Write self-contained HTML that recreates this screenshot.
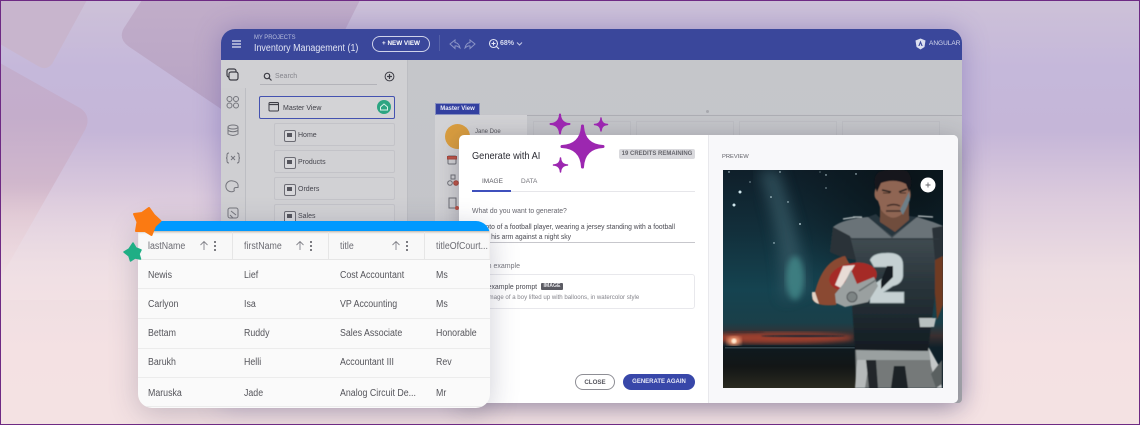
<!DOCTYPE html>
<html><head><meta charset="utf-8">
<style>
html,body{margin:0;padding:0}
body{width:1140px;height:425px;overflow:hidden;position:relative;font-family:"Liberation Sans",sans-serif;background:linear-gradient(180deg,#cdc1d8 0%,#c5b8da 16%,#c5b6d8 31%,#dccbdd 47%,#eddde2 64%,#f4e1e3 82%,#f4e2e3 100%)}
div,span{position:absolute;box-sizing:border-box;white-space:nowrap}
.frame{left:0;top:0;width:1140px;height:425px;border:1px solid #6e2a84;z-index:50}
.app{left:221px;top:29px;width:741px;height:374px;border-radius:14px 14px 4px 4px;background:#c5c6cb;box-shadow:0 0 26px rgba(90,80,160,.38);overflow:hidden}
.hd{left:0;top:0;width:741px;height:31px;background:#3a479b;color:#fff}
.ws{left:0;top:31px;width:741px;height:343px;background:linear-gradient(180deg,#c5c6ca,#c3c4c9 60%,#a9aaaf)}
.side{left:0;top:31px;width:187px;height:343px;background:#d0d0d3;border-right:1px solid #bcbdc2}
.rail{left:0;top:59px;width:25px;height:286px;border-right:1px solid #bdbec3;background:#cfcfd2}
.item{left:53px;width:121px;height:23px;background:#d1d1d4;border:1px solid #c3c3c8;border-radius:2px;font-size:7px;color:#45454d;line-height:24px;padding-left:23px}
.item i{position:absolute;left:9px;top:6px;width:10px;height:10px;border:1px solid #6c6c74;border-radius:2px;background:#d8d8db}
.item i:after{content:"";position:absolute;left:1.5px;top:2px;width:5px;height:4px;background:#55555d}
.dlg{left:459px;top:135px;width:499px;height:268px;background:#fff;border-radius:5px;box-shadow:0 4px 24px rgba(40,40,60,.3);overflow:hidden;color:#3d3d45}
.pv{left:249px;top:0;width:250px;height:268px;background:#f8f8fa;border-left:1px solid #e8e8ec}
.tbl{left:138px;top:221px;width:352px;height:187px;background:#fafafa;border-radius:14px;overflow:hidden;box-shadow:0 6px 28px rgba(60,60,90,.25);z-index:10;color:#5a5a60;font-size:9.5px}
.bar{left:0;top:0;width:352px;height:10px;background:#0099ff}
.head{left:0;top:10px;width:352px;height:29px;background:#f8f8f8;border-bottom:1px solid #e6e6e6;box-shadow:inset 0 2px 2px -1px rgba(120,100,70,.5)}
.c{font-size:9.8px;line-height:12px;color:#55555b;transform:scaleX(.9);transform-origin:0 0;margin-top:1px}
.rl{left:0;width:352px;height:1px;background:#ececec}
.vl{top:11px;width:1px;height:27px;background:#e6e6e6}
</style></head>
<body>
<svg style="position:absolute;left:0;top:0" width="1140" height="425">
<defs>
<linearGradient id="sq3" x1="0" y1="63" x2="0" y2="280" gradientUnits="userSpaceOnUse"><stop offset="0" stop-color="#c3aecd"/><stop offset=".25" stop-color="#c4adcb"/><stop offset=".55" stop-color="#d0b7cc"/><stop offset=".7" stop-color="#dfc6d2"/><stop offset="1" stop-color="#eed9de"/></linearGradient>
<linearGradient id="sq2" x1="0" y1="0" x2="0" y2="130" gradientUnits="userSpaceOnUse"><stop offset="0" stop-color="#c1adc9"/><stop offset="1" stop-color="#b6a2c4"/></linearGradient>
<linearGradient id="lf" x1="0" y1="190" x2="0" y2="300" gradientUnits="userSpaceOnUse"><stop offset="0" stop-color="#eadce6" stop-opacity="0"/><stop offset="1" stop-color="#f3e2e4" stop-opacity=".8"/></linearGradient>
</defs>
<path d="M0 0H87L52 64Q46 71 38 66L0 44Z" fill="#c8b5cd"/>
<path d="M142 0H360L335 50L300 120L230 115L128 46Q118 38 124 28Z" fill="url(#sq2)"/>
<path d="M0 63L80 108Q92 116 85 130L0 279Z" fill="url(#sq3)"/>
<path d="M0 190H140V300H0Z" fill="url(#lf)"/>
</svg>

<div class="app">
 <div class="ws"></div>
 <div class="side"></div>
 <div class="rail"></div>
 <div class="hd">
  <svg style="position:absolute;left:11px;top:11px" width="10" height="8"><path d="M0 1H9M0 4H9M0 7H9" stroke="#e3e6f4" stroke-width="1.300"/></svg>
  <span style="left:33px;top:4.500px;font-size:6.500px;color:#b9bfdd;line-height:8px;transform:scaleX(.9);transform-origin:0 0">MY PROJECTS</span>
  <span style="left:33px;top:13px;font-size:10px;color:#e2e5f4;line-height:13px;transform:scaleX(.89);transform-origin:0 0">Inventory Management (1)</span>
  <div style="left:151px;top:7px;width:58px;height:16px;border:1px solid #cfd3ea;border-radius:9px;color:#fff;font-size:6.300px;font-weight:bold;text-align:center;line-height:14px">+ NEW VIEW</div>
  <div style="left:218px;top:6px;width:1px;height:16px;background:#5360a8"></div>
  <svg style="position:absolute;left:228px;top:10px" width="30" height="12" fill="none" stroke="#8b94c6" stroke-width="1"><path d="M1 5L6 1V3.500Q10 4 11 9Q8 6.500 6 7V9.500Z"/><path d="M26 5L21 1V3.500Q17 4 16 9Q19 6.500 21 7V9.500Z"/></svg>
  <svg style="position:absolute;left:267px;top:9px" width="12" height="12" fill="none" stroke="#e3e6f5" stroke-width="1.100"><circle cx="5.500" cy="5.500" r="4"/><path d="M8.500 8.500L11 11M3.500 5.500H7.500M5.500 3.500V7.500"/></svg>
  <span style="left:279px;top:11px;font-size:7px;font-weight:bold;color:#d5d9ee;line-height:8px">68%</span>
  <svg style="position:absolute;left:295px;top:12px" width="7" height="6" fill="none" stroke="#c5cae6"><path d="M1 1.500L3.500 4L6 1.500"/></svg>
  <svg style="position:absolute;left:694px;top:9px" width="11" height="12"><path d="M5.500 .5L10.500 2.500L9.500 9L5.500 11.500L1.500 9L.5 2.500Z" fill="#dde0f0"/><path d="M5.500 2.500L3.300 8H4.500L5.500 5.500L6.500 8H7.700Z" fill="#3a479b"/></svg>
  <span style="left:708px;top:11px;font-size:6.500px;color:#d5d9ee;line-height:8px">ANGULAR S</span>
 </div>
 <svg style="position:absolute;left:0;top:31px" width="30" height="195" fill="none" stroke="#74757c" stroke-width="1">
  <rect x="6" y="9" width="9" height="8" rx="2" stroke="#3c3c44" stroke-width="1.200"/><rect x="8" y="12" width="9" height="8" rx="2" stroke="#3c3c44" stroke-width="1.200" fill="#d0d0d3"/>
  <circle cx="8.500" cy="39" r="2.500"/><circle cx="15" cy="39" r="2.500"/><circle cx="8.500" cy="45.500" r="2.500"/><circle cx="15" cy="45.500" r="2.500"/>
  <ellipse cx="12" cy="67" rx="5" ry="2"/><path d="M7 67V74Q12 77 17 74V67M7 70.500Q12 73 17 70.500"/>
  <path d="M8 93Q6 93 6 95V96.500Q6 98 5 98Q6 98 6 99.500V101Q6 103 8 103M16 93Q18 93 18 95V96.500Q18 98 19 98Q18 98 18 99.500V101Q18 103 16 103M10 96L14 100M14 96L10 100"/>
  <path d="M12 121A5.500 5.500 0 1 0 12 131.500Q14 131 13 129.500Q13 127.500 15 127.500H17Q18 122 12 121Z"/>
  <rect x="7" y="148" width="10" height="10" rx="2"/><path d="M10 151L15 155M9 155L12 158"/>
 </svg>
 <svg style="position:absolute;left:41px;top:42px" width="12" height="12" fill="none" stroke="#3d3d45" stroke-width="1.200"><circle cx="5" cy="5" r="2.700"/><path d="M7 7L9.500 9.500"/></svg>
 <span style="left:54px;top:43px;font-size:7px;color:#85858c;line-height:10px">Search</span>
 <div style="left:39px;top:55px;width:117px;height:1px;background:#b3b3b9"></div>
 <svg style="position:absolute;left:163px;top:42px" width="11" height="11" fill="none" stroke="#3d3d45"><circle cx="5.500" cy="5.500" r="4.400"/><path d="M5.500 3V8M3 5.500H8" stroke-width="1.200"/></svg>
 <div style="left:38px;top:67px;width:136px;height:23px;border:1px solid #4452b0;border-radius:2px;background:#d3d3d6"></div>
 <svg style="position:absolute;left:47px;top:72px" width="12" height="12" fill="none"><rect x="1" y="1.500" width="9.500" height="8.500" rx="1" stroke="#3d3d45" stroke-width="1"/><path d="M1 3.500H10.500" stroke="#3d3d45" stroke-width="1.300"/></svg>
 <span style="left:62px;top:74.500px;font-size:7px;color:#3e3e46;line-height:10px">Master View</span>
 <div style="left:156px;top:71px;width:14px;height:14px;border-radius:50%;background:#2ca582"></div>
 <svg style="position:absolute;left:158px;top:73px" width="10" height="10" fill="none" stroke="#d8f1e9"><path d="M1.500 5L5 2L8.500 5V8H1.500Z"/></svg>
 <div class="item" style="top:94px">Home<i></i></div>
 <div class="item" style="top:121px">Products<i></i></div>
 <div class="item" style="top:148px">Orders<i></i></div>
 <div class="item" style="top:175px">Sales<i></i></div>

 <div style="left:214px;top:74px;width:45px;height:12px;background:#3340a0;border:1px solid #8890c0;color:#e8eaf6;font-size:6px;font-weight:bold;line-height:10px;text-align:center">Master View</div>
 <div style="left:215px;top:86px;width:527px;height:1px;background:#adaeb4"></div>
 <div style="left:214px;top:86px;width:92px;height:230px;background:#d2d2d5"></div>
 <div style="left:312px;top:92px;width:98px;height:40px;border:1px solid #bdbec3"></div>
 <div style="left:415px;top:92px;width:98px;height:40px;border:1px solid #bdbec3"></div>
 <div style="left:518px;top:92px;width:98px;height:40px;border:1px solid #bdbec3"></div>
 <div style="left:621px;top:92px;width:98px;height:40px;border:1px solid #bdbec3"></div>
 <div style="left:224px;top:95px;width:25px;height:25px;border-radius:50%;background:#d99d3f"></div>
 <span style="left:254px;top:100px;font-size:6px;color:#55555c;line-height:7px">Jane Doe</span>
 <svg style="position:absolute;left:224px;top:126px" width="16" height="70" fill="none" stroke="#6e6f76"><rect x="3" y="1" width="8" height="8" rx="1"/><path d="M2.500 1.500H11.500V4H2.500Z" fill="#c25648" stroke="#a8483e"/><circle cx="5" cy="28" r="2.300"/><circle cx="11" cy="28" r="2.300" fill="#c25648" stroke="#a8483e"/><rect x="6" y="20" width="4" height="4"/><rect x="4" y="43" width="7" height="10"/><circle cx="12" cy="53" r="2" fill="#c25648" stroke="none"/></svg>
</div>
<div style="left:706px;top:110px;width:3px;height:3px;border-radius:50%;background:#a7a8ae"></div>

<div class="dlg">
 <span style="left:13px;top:15px;font-size:10.500px;color:#2b2b33;line-height:13px;transform:scaleX(.88);transform-origin:0 0">Generate with AI</span>
 <div style="left:160px;top:14px;width:76px;height:10px;background:#d9d9dd;border-radius:2px;color:#66666d;font-size:6px;font-weight:bold;text-align:center;line-height:11px">19 CREDITS REMAINING</div>
 <span style="left:23px;top:42px;font-size:6.500px;color:#5b5b63;line-height:9px">IMAGE</span>
 <span style="left:62px;top:42px;font-size:6.500px;color:#74747b;line-height:9px">DATA</span>
 <div style="left:13px;top:56px;width:223px;height:1px;background:#e6e6ea"></div>
 <div style="left:13px;top:55px;width:39px;height:2px;background:#3f50bd"></div>
 <span style="left:13px;top:71px;font-size:7.500px;color:#66666e;line-height:10px;transform:scaleX(.91);transform-origin:0 0">What do you want to generate?</span>
 <span style="left:13px;top:87px;font-size:7.500px;color:#4a4a52;line-height:10px;transform:scaleX(.9);transform-origin:0 0">A photo of a football player, wearing a jersey standing with a football</span>
 <span style="left:13px;top:97px;font-size:7.500px;color:#4a4a52;line-height:10px;transform:scaleX(.9);transform-origin:0 0">under his arm against a night sky</span>
 <div style="left:13px;top:107px;width:223px;height:1px;background:#c7c7cc"></div>
 <span style="left:13px;top:127px;font-size:7px;color:#77777e;line-height:10px">Try an example</span>
 <div style="left:13px;top:139px;width:223px;height:35px;border:1px solid #e8e8ec;border-radius:3px"></div>
 <span style="left:17px;top:147px;font-size:7.500px;color:#4a4a52;line-height:10px;transform:scaleX(.92);transform-origin:0 0">Try example prompt</span>
 <div style="left:82px;top:148px;width:22px;height:7px;background:#5b5b63;border-radius:1px;color:#e6e6ea;font-size:5.200px;font-weight:bold;text-align:center;line-height:7px">IMAGE</div>
 <span style="left:19px;top:158px;font-size:6.100px;color:#85858c;line-height:9px">An image of a boy lifted up with balloons, in watercolor style</span>
 <div style="left:116px;top:239px;width:40px;height:16px;border:1px solid #8e8e95;border-radius:8px;color:#55555d;font-size:6.200px;font-weight:bold;text-align:center;line-height:15px">CLOSE</div>
 <div style="left:164px;top:239px;width:72px;height:16px;background:#3847a9;border-radius:8px;color:#e9ebf8;font-size:6px;font-weight:bold;text-align:center;line-height:17px">GENERATE AGAIN</div>
 <div class="pv">
  <span style="left:13px;top:18px;font-size:5.800px;color:#5f5f66;line-height:8px">PREVIEW</span>
  <svg style="position:absolute;left:14px;top:35px" width="220" height="218" viewBox="0 0 220 218">
  <defs>
   <linearGradient id="sky" x1="0" y1="0" x2="0" y2="1"><stop offset="0" stop-color="#0f1f2a"/><stop offset=".28" stop-color="#122f3b"/><stop offset=".55" stop-color="#154350"/><stop offset=".7" stop-color="#1a3f49"/><stop offset=".76" stop-color="#3a2f30"/><stop offset=".815" stop-color="#0f2029"/><stop offset="1" stop-color="#0f2029"/></linearGradient>
   <linearGradient id="gnd" x1="0" y1="0" x2="0" y2="1"><stop offset="0" stop-color="#0e1a20"/><stop offset=".5" stop-color="#131616"/><stop offset="1" stop-color="#2a2a20"/></linearGradient>
   <radialGradient id="dk" cx=".85" cy=".05" r=".6"><stop offset="0" stop-color="#091318" stop-opacity=".95"/><stop offset="1" stop-color="#091318" stop-opacity="0"/></radialGradient>
   <filter id="b6"><feGaussianBlur stdDeviation="7"/></filter><filter id="b3"><feGaussianBlur stdDeviation="3"/></filter><filter id="b2"><feGaussianBlur stdDeviation="2.500"/></filter><filter id="b1"><feGaussianBlur stdDeviation=".7"/></filter><filter id="b0"><feGaussianBlur stdDeviation=".4"/></filter>
   <linearGradient id="jer" x1="0" y1="0" x2="0" y2="1"><stop offset="0" stop-color="#4a555b"/><stop offset=".45" stop-color="#2d383e"/><stop offset="1" stop-color="#121c22"/></linearGradient>
  </defs>
  <rect width="220" height="218" fill="url(#sky)"/>
  <rect width="220" height="218" fill="url(#dk)"/>
  <path d="M55 0Q75 60 85 120L60 130Q58 60 35 0Z" fill="#3b5d69" filter="url(#b6)" opacity=".7"/>
  <ellipse cx="72" cy="108" rx="9" ry="22" fill="#45908f" filter="url(#b3)" opacity=".7"/>
  <g fill="#cfe6ec"><circle cx="17" cy="22" r="1.500"/><circle cx="11" cy="35" r="1.500"/><circle cx="27" cy="12" r=".6"/><circle cx="57" cy="2" r=".7"/><circle cx="103" cy="5" r=".7"/><circle cx="133" cy="4" r=".7"/><circle cx="103" cy="18" r=".6"/><circle cx="48" cy="27" r=".8"/><circle cx="65" cy="32" r=".7"/><circle cx="77" cy="54" r=".9"/><circle cx="51" cy="73" r=".7"/><circle cx="6" cy="2" r=".7"/><circle cx="97" cy="2" r=".5"/></g>
  <ellipse cx="55" cy="168" rx="75" ry="5.500" fill="#b8452f" filter="url(#b2)" opacity=".8"/>
  <ellipse cx="80" cy="166" rx="42" ry="1.200" fill="#2a2a33" filter="url(#b1)"/>
  <ellipse cx="22" cy="162" rx="20" ry="1" fill="#4a2a2c" filter="url(#b1)"/>
  <ellipse cx="11" cy="171" rx="7" ry="4.500" fill="#f5a077" filter="url(#b2)"/>
  <circle cx="11" cy="171" r="2.500" fill="#ffe9cf" filter="url(#b1)"/>
  <rect x="0" y="176" width="134" height="42" fill="url(#gnd)"/>
  <rect x="2" y="177" width="130" height="1.500" fill="#5c7279" opacity=".45"/>
  <g filter="url(#b0)">
  <path d="M209 84L220 80V135L214 150Z" fill="#6f3a22"/>
  <path d="M133 218L132 178H206L216 196L219 218Z" fill="#747979"/>
  <path d="M135 178L132 218H142L148 180Z" fill="#b5b9b9"/>
  <path d="M133 178H206L208 190H134Z" fill="#9aa0a0"/>
  <path d="M143 190L146 218H155L153 190Z" fill="#20272a"/>
  <path d="M171 196L168 218H185L182 196Z" fill="#1c2225"/>
  <path d="M206 178L216 196L219 218H214L208 196Z" fill="#c4c8c8"/>
  <path d="M208 204L219 190V214L213 218Z" fill="#5a6061"/>
  <path d="M132 180L128 120L133 90L107 82L110 57Q120 49 145 47L169 66L194 47L210 52L220 56V85L212 90V125L205 181Z" fill="url(#jer)"/>
  <path d="M110 57Q120 49 145 47L169 68L194 47L210 52L220 56L216 68H129Z" fill="#6b7378"/>
  <path d="M107 82L110 57L127 66L133 90Q118 88 107 82Z" fill="#2a3338"/>
  <path d="M209 58L220 56V86L212 90Z" fill="#2a3338"/>
  <path d="M145 47L169 66L194 47L186 46L169 60L153 44Z" fill="#26343d"/>
  <path d="M120 49L133 47M130 47H139M195 46L210 47" stroke="#dfe5e6" stroke-width="1.300" opacity=".85"/>
  <path d="M128 69H216" stroke="#2e383e" stroke-width="1"/>
  <path d="M196 148H213L211 157H197Z" fill="#b9c0c0"/>
  <path d="M147 90Q150 83 163 83Q180 82 180 95V106Q179 114 170 116L161 122H181V133H147V117L163 106Q166 102 164 97H151Z" fill="#c5d0d2" stroke="#8fa0a3" stroke-width=".7"/>
  <path d="M164 96H170V107L158 119V111Z" fill="#151e24"/>
  <path d="M122 86Q100 90 92 122L89 129Q93 137 113 135L130 100Z" fill="#8a4a31"/>
  <path d="M89 122Q88 132 96 134L92 122Z" fill="#e3d2c3"/>
  <ellipse cx="130" cy="107" rx="24" ry="14" fill="#a52a27" transform="rotate(-10 130 107)"/>
  <path d="M120 96L112 115L118 118L132 95Z" fill="#e8dcd6"/>
  <path d="M112 124L122 112L128 100L134 114L151 107L155 116L145 132L122 137L113 133Z" fill="#9aa0a0"/>
  <circle cx="129" cy="127" r="5" fill="#7d8484" stroke="#55595b"/>
  <path d="M136 121L153 110" stroke="#6d7373" stroke-width="1.500"/>
  <path d="M157 30V52L172 62L186 50V30Z" fill="#6f4d3c"/>
  <path d="M152 20Q150 28 155 31L158 40Q166 50 174 47Q184 43 185 32Q189 28 187 20L183 8H157Z" fill="#8f6552"/>
  <path d="M154 22Q148 8 156 2Q170 -3 184 1Q191 8 186 22L183 14Q172 8 158 13Z" fill="#14141a"/>
  <path d="M159 20L168 22M176 22L184 19" stroke="#1d1a1a" stroke-width="1.500"/>
  <path d="M160 23H167M177 23H183" stroke="#3c2a24" stroke-width="1"/>
  <path d="M164 36Q171 33 177 36M163 41H178" stroke="#3e2c26" stroke-width="1.400" fill="none"/>
  <path d="M177 40L186 22L187 30L180 45Z" fill="#5e8aa0" opacity=".7"/>
  </g>
  <circle cx="205" cy="15" r="7.500" fill="#fff"/>
  <path d="M205 12.500V17.500M202.500 15H207.500" stroke="#66666c" stroke-width=".9"/>
  </svg>
 </div>
</div>

<div class="tbl">
 <div class="bar"></div>
 <div class="head"></div>
 <div class="vl" style="left:94px"></div><div class="vl" style="left:190px"></div><div class="vl" style="left:286px"></div>
 <span class="c" style="left:10px;top:19px;color:#6b6b72">lastName</span>
 <span class="c" style="left:106px;top:19px;color:#6b6b72">firstName</span>
 <span class="c" style="left:202px;top:19px;color:#6b6b72">title</span>
 <span class="c" style="left:298px;top:19px;color:#6b6b72">titleOfCourt...</span>
 <svg style="position:absolute;left:0;top:10px" width="352" height="30" fill="none" stroke="#85858c" stroke-width=".9">
  <path d="M66 19V11M62.500 14L66 10.500L69.500 14M162 19V11M158.500 14L162 10.500L165.500 14M258 19V11M254.500 14L258 10.500L261.500 14"/>
  <g fill="#55555b" stroke="none"><circle cx="77" cy="11" r="1"/><circle cx="77" cy="15" r="1"/><circle cx="77" cy="19" r="1"/><circle cx="173" cy="11" r="1"/><circle cx="173" cy="15" r="1"/><circle cx="173" cy="19" r="1"/><circle cx="269" cy="11" r="1"/><circle cx="269" cy="15" r="1"/><circle cx="269" cy="19" r="1"/></g>
 </svg>
 <div class="rl" style="top:67px"></div><div class="rl" style="top:97px"></div><div class="rl" style="top:127px"></div><div class="rl" style="top:156px"></div><div class="rl" style="top:185px"></div>
 <span class="c" style="left:10px;top:48px">Newis</span><span class="c" style="left:106px;top:48px">Lief</span><span class="c" style="left:202px;top:48px">Cost Accountant</span><span class="c" style="left:298px;top:48px">Ms</span>
 <span class="c" style="left:10px;top:77px">Carlyon</span><span class="c" style="left:106px;top:77px">Isa</span><span class="c" style="left:202px;top:77px">VP Accounting</span><span class="c" style="left:298px;top:77px">Ms</span>
 <span class="c" style="left:10px;top:106px">Bettam</span><span class="c" style="left:106px;top:106px">Ruddy</span><span class="c" style="left:202px;top:106px">Sales Associate</span><span class="c" style="left:298px;top:106px">Honorable</span>
 <span class="c" style="left:10px;top:135px">Barukh</span><span class="c" style="left:106px;top:135px">Helli</span><span class="c" style="left:202px;top:135px">Accountant III</span><span class="c" style="left:298px;top:135px">Rev</span>
 <span class="c" style="left:10px;top:166px">Maruska</span><span class="c" style="left:106px;top:166px">Jade</span><span class="c" style="left:202px;top:166px">Analog Circuit De...</span><span class="c" style="left:298px;top:166px">Mr</span>
</div>

<svg style="position:absolute;left:0;top:0;z-index:20" width="1140" height="425">
 <path d="M149 208L154 215L160.500 221L155 226L151.500 235L145 231L136 231L137.500 222L134 214L142 213Z" fill="#fb7a12" stroke="#fb7a12" stroke-width="2" stroke-linejoin="round"/>
 <path d="M133 243L136 248L141 250L139 254L140.500 259L135 258L130.500 261L129 256L124 252L129 249Z" fill="#1fae85" stroke="#1fae85" stroke-width="1.500" stroke-linejoin="round"/>
 <g fill="#9c27b0" stroke="#9c27b0" stroke-linejoin="round">
  <path stroke-width="3" d="M582.500 126Q583.500 145.500 603 146.500Q583.500 147.500 582.500 167Q581.500 147.500 562 146.500Q581.500 145.500 582.500 126Z"/>
  <path stroke-width="2" d="M560 114.500Q560.500 123.500 569.500 124Q560.500 124.500 560 133.500Q559.500 124.500 550.500 124Q559.500 123.500 560 114.500Z"/>
  <path stroke-width="1.500" d="M601 118Q601.300 124.200 607.500 124.500Q601.300 124.800 601 131Q600.700 124.800 594.500 124.500Q600.700 124.200 601 118Z"/>
  <path stroke-width="1.500" d="M560.500 158Q560.800 164.700 567.500 165Q560.800 165.300 560.500 172Q560.200 165.300 553.500 165Q560.200 164.700 560.500 158Z"/>
 </g>
</svg>
<div class="frame"></div>
</body></html>
